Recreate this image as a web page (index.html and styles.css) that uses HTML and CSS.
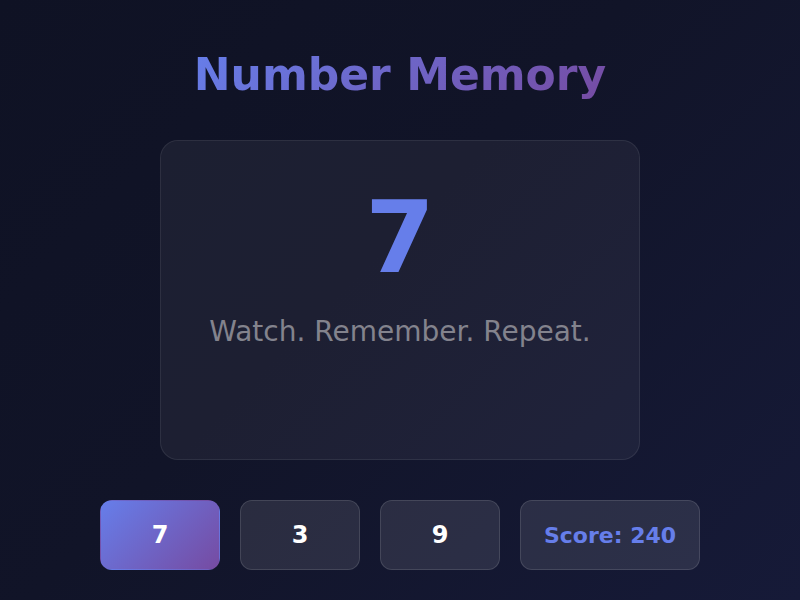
FILE: index.html
```html
<!DOCTYPE html>
<html>
<head>
<meta charset="utf-8">
<link rel="stylesheet" href="styles.css">
</head>
<body>
<main class="app">
  <h1 class="title">Number Memory</h1>
  <section class="card">
    <div class="digit">7</div>
    <p class="tagline">Watch. Remember. Repeat.</p>
  </section>
  <div class="controls">
    <button class="key active">7</button>
    <button class="key">3</button>
    <button class="key">9</button>
    <div class="score">Score: 240</div>
  </div>
</main>
</body>
</html>
```
FILE: styles.css
```css
html, body {
  margin: 0;
  padding: 0;
  width: 800px;
  height: 600px;
  overflow: hidden;
}
body {
  background: linear-gradient(135deg, #0f1224 0%, #111428 45%, #161a38 100%);
  font-family: "DejaVu Sans", sans-serif;
}
.app {
  display: flex;
  flex-direction: column;
  align-items: center;
  padding-top: 48px;
}
.title {
  margin: 0;
  font-size: 44px;
  line-height: 54px;
  font-weight: bold;
  background: linear-gradient(135deg, #667eea, #764ba2);
  -webkit-background-clip: text;
  background-clip: text;
  color: transparent;
}
.card {
  margin-top: 38px;
  width: 480px;
  height: 320px;
  box-sizing: border-box;
  border-radius: 18px;
  background: rgba(255, 255, 255, 0.05);
  border: 1px solid rgba(255, 255, 255, 0.08);
  display: flex;
  flex-direction: column;
  align-items: center;
  padding-top: 37px;
}
.digit {
  font-size: 100px;
  line-height: 120px;
  font-weight: bold;
  color: #667eea;
}
.tagline {
  margin: 17px 0 0;
  font-size: 28px;
  line-height: 34px;
  color: #83838d;
}
.controls {
  margin-top: 40px;
  display: flex;
  gap: 20px;
}
.key, .score {
  height: 70px;
  box-sizing: border-box;
  border-radius: 12px;
  border: 1px solid rgba(255, 255, 255, 0.12);
  background: rgba(255, 255, 255, 0.1);
  font-family: "DejaVu Sans", sans-serif;
  font-weight: bold;
  display: flex;
  align-items: center;
  justify-content: center;
}
.key {
  width: 120px;
  font-size: 24px;
  color: #ffffff;
  padding: 0;
}
.key.active {
  background: linear-gradient(135deg, #667eea, #764ba2);
  border-color: transparent;
}
.score {
  width: 180px;
  font-size: 22px;
  color: #667eea;
}
```
